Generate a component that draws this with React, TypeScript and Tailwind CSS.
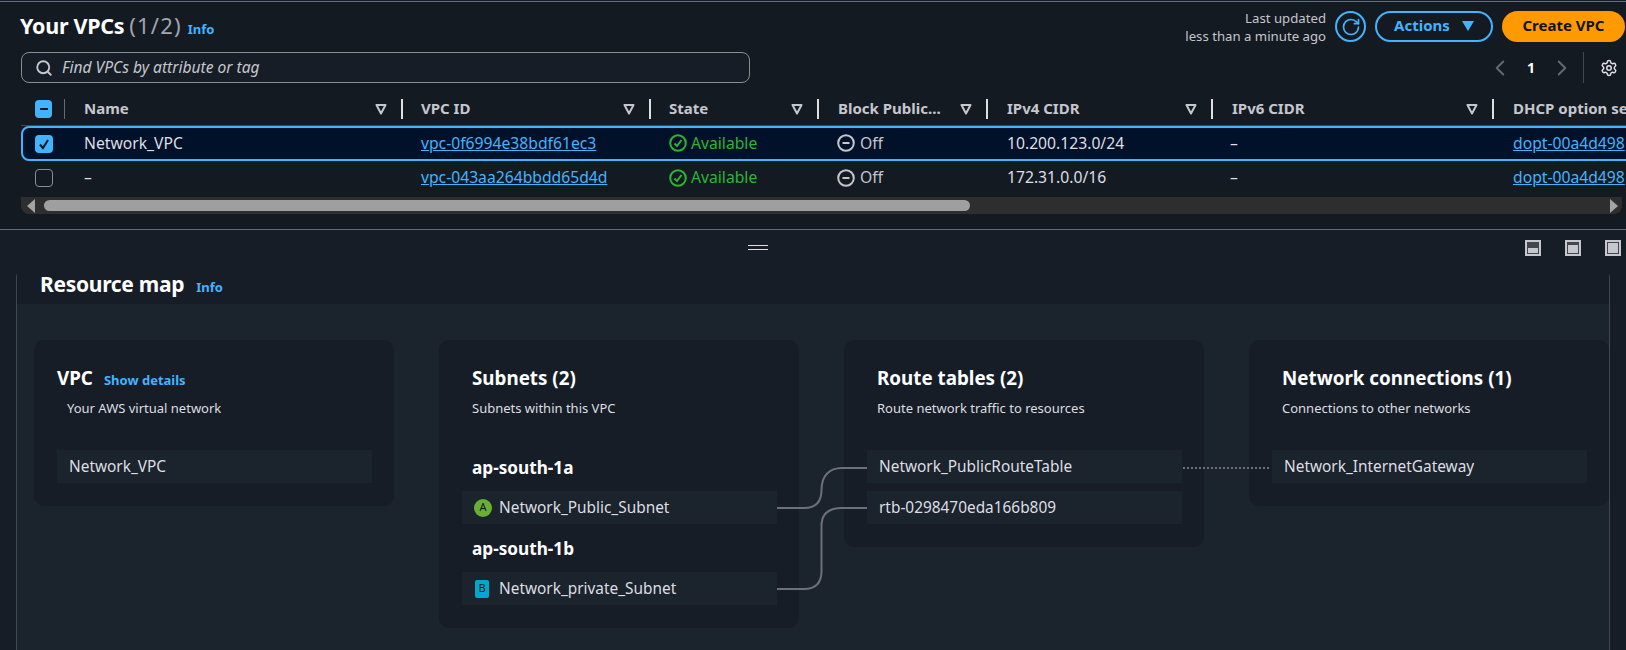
import { ChevronLeft, ChevronRight, RotateCw, Search, Settings } from 'lucide-react'

const font = { fontFamily: '"Noto Sans", sans-serif' }

const columns = [
  { label: 'Name', width: 'w-[338px]', pad: 'pl-[19px]' },
  { label: 'VPC ID', width: 'w-[248px]', pad: 'pl-[18px]' },
  { label: 'State', width: 'w-[168px]', pad: 'pl-[18px]' },
  { label: 'Block Public...', width: 'w-[169px]', pad: 'pl-[19px]' },
  { label: 'IPv4 CIDR', width: 'w-[225px]', pad: 'pl-[19px]' },
  { label: 'IPv6 CIDR', width: 'w-[281px]', pad: 'pl-[19px]' },
]

const rows = [
  { name: 'Network_VPC', id: 'vpc-0f6994e38bdf61ec3', cidr: '10.200.123.0/24', selected: true },
  { name: '–', id: 'vpc-043aa264bbdd65d4d', cidr: '172.31.0.0/16', selected: false },
]

function FilterCaret() {
  return (
    <svg width="12" height="12" viewBox="0 0 12 12" className="shrink-0 text-[#c6c6cd]">
      <path d="M1.5 2h9L6 10.5z" fill="none" stroke="currentColor" strokeWidth="2" strokeLinejoin="round" />
    </svg>
  )
}

function StatusIcon({ off }: { off?: boolean }) {
  return (
    <svg width="18" height="18" viewBox="0 0 18 18" fill="none" stroke="currentColor" strokeWidth="2" className="shrink-0">
      <circle cx="9" cy="9" r="7.8" />
      {off ? <path d="M5.5 9h7" /> : <path d="M5.5 9.5l2.5 2.5 4.5-6" />}
    </svg>
  )
}

function LayoutIcon({ fill }: { fill: string }) {
  return (
    <div className="relative h-[16px] w-[16px] border-2 border-[#c6c6cd] bg-[#414750]">
      <div className={`absolute inset-x-[1px] bottom-[1px] bg-[#c6c6cd] ${fill}`} />
    </div>
  )
}

function MapCard({ title, sub, subIndent, width, children }: { title: React.ReactNode; sub: string; subIndent?: string; width: string; children: React.ReactNode }) {
  return (
    <div className={`shrink-0 rounded-[10px] bg-[#161d26] pt-[25px] ${width}`}>
      {title}
      <div className={`mt-[8px] text-[13px] leading-[18px] text-[#dedee3] ${subIndent}`}>{sub}</div>
      {children}
    </div>
  )
}

function Item({ children, className }: { children: React.ReactNode; className?: string }) {
  return (
    <div className={`flex h-[33px] items-center bg-[#1b232d] text-[15.4px] text-[#dedee3] ${className}`}>
      {children}
    </div>
  )
}

export default function App() {
  return (
    <div style={font} className="h-[650px] w-[1626px] overflow-hidden bg-[#161d26] text-[#dedee3]">
      <div className="h-[230px] pt-[1px]">
        <div className="h-[229px] border-y border-[#5f6b7a] bg-[#141a22] pt-[9px]">
          <div className="flex h-[31px] items-center justify-between pl-[20px] pr-[1px]">
            <div className="flex items-baseline pb-[2px]">
              <span className="text-[21.5px] leading-[30px] font-bold tracking-[-0.3px] text-white">Your VPCs</span>
              <span className="ml-[5px] text-[22px] leading-[30px] tracking-[1.2px] text-[#a4a4ad]">(1/2)</span>
              <span className="ml-[6px] text-[13px] font-bold text-[#42b4ff]">Info</span>
            </div>
            <div className="flex items-center">
              <div className="text-right text-[13.2px] leading-[18px] text-[#c6c6cd]">
                <div>Last updated</div>
                <div>less than a minute ago</div>
              </div>
              <div className="ml-[9px] flex h-[31px] w-[31px] items-center justify-center rounded-full border-2 border-[#42b4ff] text-[#42b4ff]">
                <RotateCw size={20} strokeWidth={2} />
              </div>
              <button className="ml-[9px] flex h-[31px] w-[118px] items-center justify-center gap-[12px] rounded-full border-2 border-[#42b4ff] pb-[2px] text-[15px] font-bold text-[#42b4ff]">
                Actions
                <svg width="12" height="10" viewBox="0 0 12 10"><path d="M0 0h12L6 10z" fill="currentColor" /></svg>
              </button>
              <button className="ml-[9px] h-[31px] w-[123px] rounded-full bg-[#ff9900] pb-[2px] text-[15px] font-bold text-[#0f141a]">Create VPC</button>
            </div>
          </div>

          <div className="mt-[10px] flex h-[31px] items-center justify-between pl-[21px]">
            <div className="flex h-[31px] w-[729px] items-center rounded-[8px] border border-[#8c8c94] bg-[#161d26] pl-[13px]">
              <Search size={18} strokeWidth={2.5} className="text-[#c6c6cd]" />
              <span className="ml-[9px] text-[15.6px] italic text-[#c6c6cd]">Find VPCs by attribute or tag</span>
            </div>
            <div className="flex items-center pr-[8px] text-[#656871]">
              <ChevronLeft size={26} strokeWidth={1.8} />
              <span className="mx-[14px] text-[14px] font-bold text-white">1</span>
              <ChevronRight size={26} strokeWidth={1.8} />
              <div className="ml-[8px] h-[31px] w-px bg-[#424650]" />
              <Settings size={18} strokeWidth={2} className="ml-[16px] text-[#dedee3]" />
            </div>
          </div>

          <div className="mt-[11px] overflow-hidden pl-[21px]">
            <div className="flex h-[32px] w-[1700px] items-center border-b border-[#424650] pb-[2px] text-[15px] font-bold text-[#c6c6cd]">
              <div className="flex h-[18px] w-[44px] shrink-0 items-center pl-[14px]">
                <div className="flex h-[18px] w-[18px] items-center justify-center rounded-[4px] bg-[#42b4ff]">
                  <div className="h-[2px] w-[8px] bg-[#0f141a]" />
                </div>
                <div className="ml-[12px] h-[20px] w-px shrink-0 bg-[#5f6b7a]" />
              </div>
              {columns.map((col) => (
                <div key={col.label} className={`flex h-[20px] shrink-0 items-center justify-between border-r-2 border-[#dedee3] pr-[14px] ${col.pad} ${col.width}`}>
                  <span>{col.label}</span>
                  <FilterCaret />
                </div>
              ))}
              <div className="pl-[19px]">DHCP option set</div>
            </div>
          </div>

          <div className="overflow-hidden">
            {rows.map((row) => (
              <div
                key={row.id}
                className={`ml-[21px] flex w-[1640px] items-center border-2 text-[15.7px] ${row.selected ? 'h-[35px] rounded-l-[8px] border-[#42b4ff] bg-[#001129]' : 'h-[34px] border-transparent'}`}
              >
                <div className="flex w-[42px] shrink-0 pl-[12px]">
                  {row.selected ? (
                    <div className="flex h-[18px] w-[18px] items-center justify-center rounded-[4px] bg-[#42b4ff] text-[#0f141a]">
                      <svg width="12" height="12" viewBox="0 0 12 12" fill="none" stroke="currentColor" strokeWidth="2"><path d="M2 6.5L5 10l5-8" /></svg>
                    </div>
                  ) : (
                    <div className="h-[18px] w-[18px] rounded-[4px] border border-[#8c8c94]" />
                  )}
                </div>
                <div className="w-[338px] shrink-0 pl-[19px]">{row.name}</div>
                <div className="w-[248px] shrink-0 pl-[18px] text-[#42b4ff]"><span className="underline">{row.id}</span></div>
                <div className="flex w-[168px] shrink-0 items-center gap-[4px] pl-[18px] text-[#2bb534]"><StatusIcon />Available</div>
                <div className="flex w-[169px] shrink-0 items-center gap-[5px] pl-[18px] text-[#c6c6cd]"><StatusIcon off />Off</div>
                <div className="w-[225px] shrink-0 pl-[19px]">{row.cidr}</div>
                <div className="w-[281px] shrink-0 pl-[17px]">–</div>
                <div className="shrink-0 pl-[19px] text-[#42b4ff]"><span className="underline">dopt-00a4d498</span></div>
              </div>
            ))}
          </div>

          <div className="ml-[21px] mt-[2px] flex h-[17px] w-[1601px] items-center rounded-b-[8px] bg-[#2e2e2e]">
            <svg width="10" height="14" viewBox="0 0 10 14" className="ml-[5px] shrink-0"><path d="M9 0v14L1 7z" fill="#a3a3a3" /></svg>
            <div className="ml-[8px] h-[11px] w-[926px] rounded-full bg-[#9f9f9f]" />
            <svg width="10" height="14" viewBox="0 0 10 14" className="ml-auto mr-[3px] shrink-0"><path d="M1 0v14l8-7z" fill="#a3a3a3" /></svg>
          </div>
        </div>
      </div>

      <div className="relative flex h-[36px] items-center justify-end gap-[24px] pr-[5px]">
        <div className="absolute left-[748px] top-[15px] h-[5px] w-[20px] border-y border-[#dedee3]" />
        <LayoutIcon fill="h-[5px]" />
        <LayoutIcon fill="h-[8px]" />
        <LayoutIcon fill="h-[10px]" />
      </div>

      <div className="mx-[16px] h-[384px] rounded-t-[12px] border-x border-[#424650] bg-[#1b232d]">
        <div className="flex h-[38px] items-center bg-[#161d26] pl-[23px]">
          <span className="text-[21px] font-bold tracking-[-0.3px] text-white">Resource map</span>
          <span className="ml-[12px] mt-[6px] text-[13px] font-bold text-[#42b4ff]">Info</span>
        </div>

        <div className="relative flex items-start gap-[45px] pl-[17px] pt-[36px]">
          <MapCard
            width="h-[166px] w-[360px] pl-[23px]"
            subIndent="pl-[10px]"
            title={<div className="flex items-baseline"><span className="text-[18.8px] font-bold leading-[26px] text-white">VPC</span><span className="ml-[11px] text-[13px] font-bold text-[#42b4ff]">Show details</span></div>}
            sub="Your AWS virtual network"
          >
            <Item className="mr-[22px] mt-[33px] pl-[12px]">Network_VPC</Item>
          </MapCard>

          <MapCard
            width="h-[288px] w-[360px]"
            subIndent="pl-[33px]"
            title={<div className="pl-[33px] text-[18.8px] font-bold leading-[26px] text-white">Subnets (2)</div>}
            sub="Subnets within this VPC"
          >
            <div className="mt-[38px] pl-[33px] text-[17.2px] leading-[26px] font-bold text-white">ap-south-1a</div>
            <Item className="ml-[23px] mr-[22px] mt-[10px] pl-[12px]">
              <span className="mr-[7px] flex h-[18px] w-[18px] items-center justify-center rounded-full bg-[#6aaf35] text-[11px] text-[#0f141a]">A</span>
              Network_Public_Subnet
            </Item>
            <div className="mt-[12px] pl-[33px] text-[17.2px] leading-[26px] font-bold text-white">ap-south-1b</div>
            <Item className="ml-[23px] mr-[22px] mt-[10px] pl-[13px]">
              <span className="mr-[10px] flex h-[18px] w-[14px] items-center justify-center rounded-[2px] bg-[#00a8d0] text-[11px] text-[#0f141a]">B</span>
              Network_private_Subnet
            </Item>
          </MapCard>

          <MapCard
            width="h-[207px] w-[360px]"
            subIndent="pl-[33px]"
            title={<div className="pl-[33px] text-[18.8px] font-bold leading-[26px] text-white">Route tables (2)</div>}
            sub="Route network traffic to resources"
          >
            <Item className="ml-[23px] mr-[22px] mt-[33px] pl-[12px]">Network_PublicRouteTable</Item>
            <Item className="ml-[23px] mr-[22px] mt-[8px] pl-[12px]">rtb-0298470eda166b809</Item>
          </MapCard>

          <MapCard
            width="h-[166px] w-[360px]"
            subIndent="pl-[33px]"
            title={<div className="pl-[33px] text-[18.8px] font-bold leading-[26px] text-white">Network connections (1)</div>}
            sub="Connections to other networks"
          >
            <Item className="ml-[23px] mr-[22px] mt-[33px] pl-[12px]">Network_InternetGateway</Item>
          </MapCard>

          {/* connector lines sit over the cards */}
          <svg className="pointer-events-none absolute left-0 top-0" width="1592" height="334" fill="none" stroke="#6d7079" strokeWidth="2">
            <path d="M760 204H787C798 204 804.5 198 804.5 186C804.5 172 812 164 825 164H850" />
            <path d="M760 285H787C798 285 804.5 279 804.5 267V222C804.5 210 812 204 825 204H850" />
            <path d="M1166 164H1254" strokeDasharray="2 2" />
          </svg>
        </div>
      </div>
    </div>
  )
}
